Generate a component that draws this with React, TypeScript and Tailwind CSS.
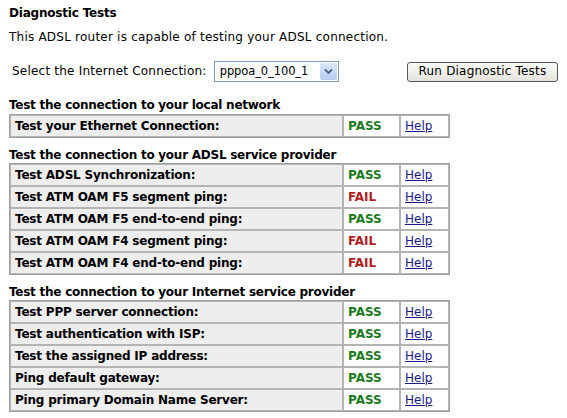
import React from 'react'

type Result = 'PASS' | 'FAIL'

interface TestRow {
  label: string
  result: Result
}

const localTests: TestRow[] = [{ label: 'Test your Ethernet Connection:', result: 'PASS' }]

const adslTests: TestRow[] = [
  { label: 'Test ADSL Synchronization:', result: 'PASS' },
  { label: 'Test ATM OAM F5 segment ping:', result: 'FAIL' },
  { label: 'Test ATM OAM F5 end-to-end ping:', result: 'PASS' },
  { label: 'Test ATM OAM F4 segment ping:', result: 'FAIL' },
  { label: 'Test ATM OAM F4 end-to-end ping:', result: 'FAIL' },
]

const ispTests: TestRow[] = [
  { label: 'Test PPP server connection:', result: 'PASS' },
  { label: 'Test authentication with ISP:', result: 'PASS' },
  { label: 'Test the assigned IP address:', result: 'PASS' },
  { label: 'Ping default gateway:', result: 'PASS' },
  { label: 'Ping primary Domain Name Server:', result: 'PASS' },
]

function TestTable({ rows }: { rows: TestRow[] }) {
  return (
    <table className="w-[439px] table-fixed border-separate border-spacing-0 border border-[#a0a0a0]">
      <colgroup>
        <col className="w-[333px]" />
        <col className="w-[57px]" />
        <col className="w-[49px]" />
      </colgroup>
      <tbody>
        {rows.map(r => (
          <tr key={r.label}>
            <td className="h-[22px] border border-[#b4b4b4] bg-[#eeeeee] px-[4px] py-0 font-bold tracking-[-0.2px] text-black">
              {r.label}
            </td>
            <td
              className={`h-[22px] border border-[#b4b4b4] bg-white px-[4px] py-0 font-bold ${
                r.result === 'PASS' ? 'text-[#1c7a1c]' : 'text-[#b01e1e]'
              }`}
            >
              {r.result}
            </td>
            <td className="h-[22px] border border-[#b4b4b4] bg-white px-[4px] py-0">
              <a href="#" className="text-[#1a1a8a] underline">
                Help
              </a>
            </td>
          </tr>
        ))}
      </tbody>
    </table>
  )
}

export default function App() {
  return (
    <div className="min-h-screen bg-white px-[9px] pt-[6px] font-['DejaVu_Sans',Verdana,sans-serif] text-[12px] leading-[15px] text-black">
      <h1 className="font-bold tracking-[-0.2px]">Diagnostic Tests</h1>
      <p className="mt-[9px] tracking-[0.22px]">This ADSL router is capable of testing your ADSL connection.</p>

      {/* Connection selector */}
      <div className="mt-[16px] flex h-[21px] items-center">
        <span className="ml-[3px] w-[203px] tracking-[0.22px]">Select the Internet Connection:</span>
        <div className="flex h-[21px] w-[126px] items-center border border-[#7f9db9] bg-white pl-[5px] pr-[1px]">
          <span className="flex-1 whitespace-nowrap text-[11.5px] tracking-[-0.1px]">pppoa_0_100_1</span>
          <span className="ml-[3px] flex h-[17px] w-[17px] shrink-0 items-center justify-center rounded-[2px] bg-gradient-to-b from-[#dbe6fb] to-[#b7cbf2]">
            <svg width="9" height="7" viewBox="0 0 9 7">
              <path d="M1 1.5 L4.5 5 L8 1.5" fill="none" stroke="#4d6185" strokeWidth="1.8" />
            </svg>
          </span>
        </div>
        <button className="ml-[68px] h-[20px] w-[152px] rounded-[3px] border border-[#555] bg-gradient-to-b from-[#fbfbf8] to-[#e4e3dc] text-[12px] tracking-[0.2px]">
          Run Diagnostic Tests
        </button>
      </div>

      <h2 className="mt-[16px] font-bold tracking-[-0.25px]">Test the connection to your local network</h2>
      <div className="mt-[1px]">
        <TestTable rows={localTests} />
      </div>

      <h2 className="mt-[10px] font-bold tracking-[-0.25px]">Test the connection to your ADSL service provider</h2>
      <div>
        <TestTable rows={adslTests} />
      </div>

      <h2 className="mt-[10px] font-bold tracking-[-0.25px]">Test the connection to your Internet service provider</h2>
      <div>
        <TestTable rows={ispTests} />
      </div>
    </div>
  )
}
